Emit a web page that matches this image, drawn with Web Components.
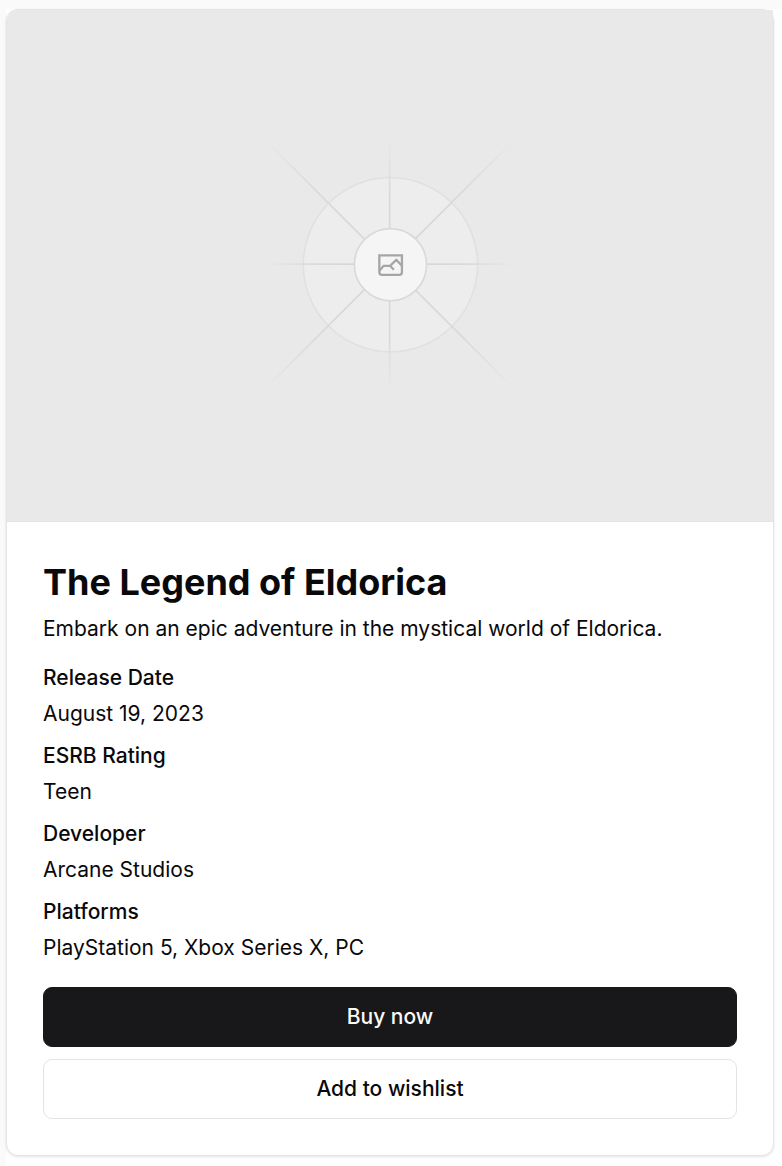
<!DOCTYPE html>
<html lang="en">
<head>
<meta charset="utf-8">
<title>The Legend of Eldorica</title>
<style>
body { margin: 0; background: #fafafa; color: #09090b; font-family: Inter, sans-serif; font-size: 21px; line-height: 30px; }
</style>
</head>
<body>
<game-page></game-page>
<script>
const define = (name, html) => customElements.define(name, class extends HTMLElement {
  constructor() {
    super();
    this.attachShadow({ mode: "open" }).innerHTML = html;
  }
});

define("cover-placeholder", `
<style>
:host { display: block; background: #e9e9e9; aspect-ratio: 3 / 2; border-top-left-radius: 11px; }
svg { display: block; width: 100%; height: 100%; }
</style>
<svg viewBox="0 0 1200 800" fill="none" role="img" aria-label="Cover placeholder">
  <defs>
    <radialGradient id="straight" gradientUnits="userSpaceOnUse" cx="600" cy="399" r="194">
      <stop offset="0" stop-color="#d6d6d6"/><stop offset=".6" stop-color="#d9d9d9"/><stop offset="1" stop-color="#d9d9d9" stop-opacity="0"/>
    </radialGradient>
    <radialGradient id="diagonal" gradientUnits="userSpaceOnUse" cx="600" cy="399" r="274">
      <stop offset="0" stop-color="#d6d6d6"/><stop offset=".6" stop-color="#d9d9d9"/><stop offset="1" stop-color="#d9d9d9" stop-opacity="0"/>
    </radialGradient>
  </defs>
  <circle cx="600.7" cy="399" r="136.5" fill="#f2f2f2" fill-opacity=".5" stroke="#e0e0e0" stroke-width="2.4"/>
  <path stroke="url(#straight)" stroke-width="2.6" d="M599.5 205V593M405 398H795"/>
  <path stroke="url(#diagonal)" stroke-width="2.6" d="M405 204L795 594M405 593L795 203"/>
  <circle cx="600.7" cy="399" r="56.5" fill="#f5f5f5" stroke="#d9d9d9" stroke-width="2.6"/>
  <g stroke="#a6a6a6" stroke-width="3.6">
    <path d="M583.3 384.3H618.7V411a4 4 0 0 1-4 4H587.3a4 4 0 0 1-4-4Z"/>
    <path d="M583.3 408.5L590 400.7H600L610 391.5L619 401M600 400.7L606 407"/>
  </g>
</svg>`);

define("game-detail", `
<style>
:host { display: block; }
dl { display: grid; gap: 6px; margin: 0; }
dt { font-weight: 500; }
dd { margin: 0; }
</style>
<dl><dt><slot name="term"></slot></dt><dd><slot></slot></dd></dl>`);

define("action-button", `
<style>
:host { display: block; }
button { box-sizing: border-box; width: 100%; height: 60px; border: 1px solid #e4e4e7; border-radius: 9px; background: #fff; color: #09090b; font: inherit; font-weight: 500; padding: 0 16px; }
:host([primary]) button { background: #18181b; border-color: #18181b; color: #fafafa; }
</style>
<button type="button"><slot></slot></button>`);

define("game-card", `
<style>
:host { display: block; background: #fff; border: 1px solid #e4e4e7; border-radius: 12px; box-shadow: 0 1px 3px rgb(0 0 0 / .1); }
.cover { border-bottom: 1px solid #e4e4e7; }
.body { display: grid; padding: 36px; }
</style>
<div class="cover"><slot name="cover"></slot></div><div class="body"><slot></slot></div>`);

define("game-page", `
<style>
:host { display: block; padding: 9px 0 0 6px; }
main { background: #fff; padding: 0 8px 12px 0; }
h1 { margin: 0; font-size: 36px; line-height: 48px; font-weight: 700; }
p { margin: 8px 0 0; }
.details { display: grid; gap: 12px; margin-top: 19px; }
.actions { display: grid; gap: 12px; margin-top: 24px; }
</style>
<main><game-card>
  <cover-placeholder slot="cover"></cover-placeholder>
  <h1>The Legend of Eldorica</h1>
  <p>Embark on an epic adventure in the mystical world of Eldorica.</p>
  <div class="details">
    <game-detail><span slot="term">Release Date</span>August 19, 2023</game-detail>
    <game-detail><span slot="term">ESRB Rating</span>Teen</game-detail>
    <game-detail><span slot="term">Developer</span>Arcane Studios</game-detail>
    <game-detail><span slot="term">Platforms</span>PlayStation 5, Xbox Series X, PC</game-detail>
  </div>
  <div class="actions">
    <action-button primary>Buy now</action-button>
    <action-button>Add to wishlist</action-button>
  </div>
</game-card></main>`);
</script>
</body>
</html>
